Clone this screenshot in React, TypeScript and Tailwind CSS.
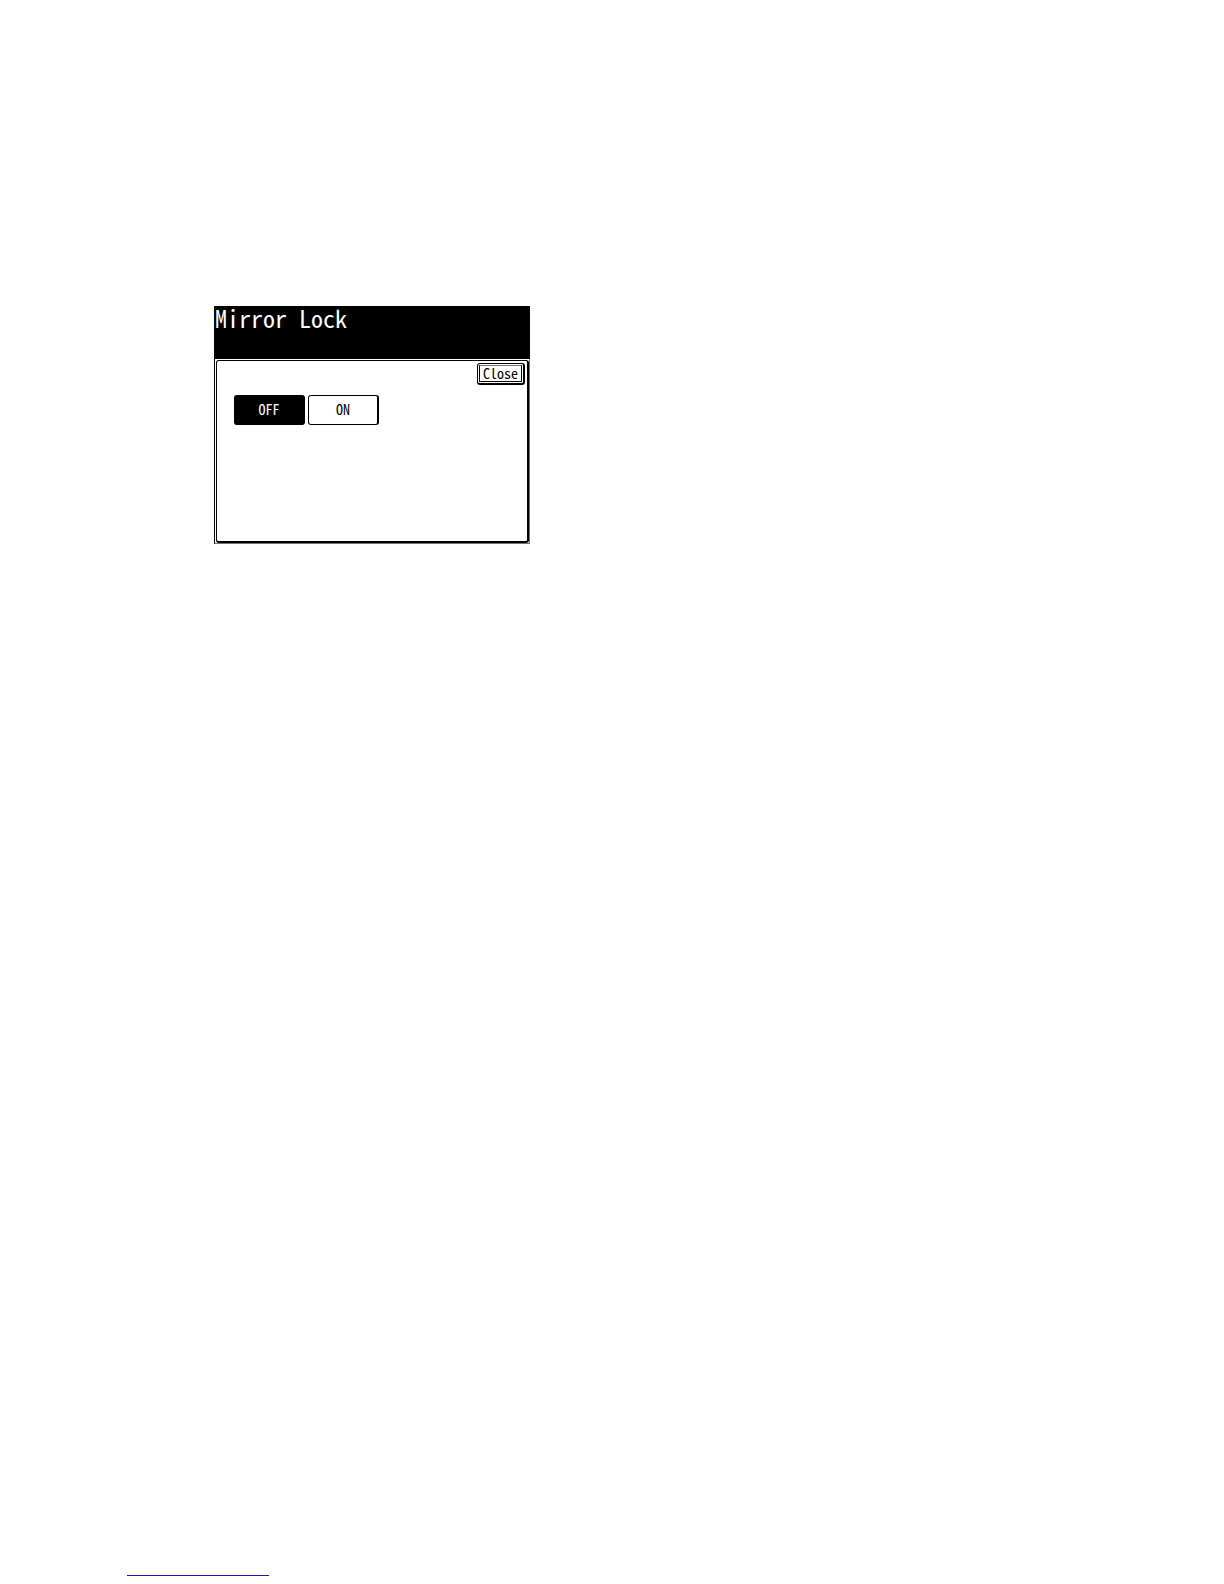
import React, { useState } from 'react';

type LockState = 'OFF' | 'ON';

const options: LockState[] = ['OFF', 'ON'];

// --- Reusable pieces ---
const OptionButton = ({ label, selected, onClick }: { label: string; selected: boolean; onClick: () => void }) => (
  <button
    type="button"
    aria-pressed={selected}
    onClick={onClick}
    className={`w-[71px] h-[30px] flex items-center justify-center rounded-[3px] border border-r-2 border-black pb-0.5 text-sm leading-none font-light ${selected ? 'bg-black text-white' : 'bg-white text-black'}`}
  >
    {label}
  </button>
);

const CloseButton = () => (
  <button type="button" className="rounded-[3px] border border-r-2 border-b-2 border-black bg-white p-px">
    <span className="flex h-[17px] items-center border border-black border-t-neutral-500 px-[3px] pb-0.5 text-sm leading-none font-light">Close</span>
  </button>
);

// --- Main screen ---
export default function App() {
  const [lock, setLock] = useState<LockState>('OFF');

  return (
    <div className="flex min-h-screen flex-col justify-between bg-white pt-[306px] pb-2 font-['Noto_Sans_Mono_CJK_JP','Noto_Sans_CJK_JP',monospace] text-black">
      <main className="ml-[214px] w-full max-w-[316px]">
        <header className="h-[53px] bg-black">
          <h1 className="pl-px text-2xl leading-6 text-white">Mirror Lock</h1>
        </header>

        <section className="border-l border-r border-b border-l-black border-r-neutral-500 border-b-neutral-500 pt-px pl-px">
          <div className="min-h-[183px] rounded-[3px] border border-r-2 border-b-2 border-black pt-0.5 pr-0.5 pl-[17px]">
            <div className="flex justify-end">
              <CloseButton />
            </div>
            <div className="mt-2.5 flex gap-[3px]">
              {options.map((option) => (
                <OptionButton key={option} label={option} selected={lock === option} onClick={() => setLock(option)} />
              ))}
            </div>
          </div>
        </section>
      </main>

      <footer className="flex pl-[127px]">
        <a href="#top" aria-label="Back to top" className="block h-px w-[142px] bg-[#1c1c9c]" />
      </footer>
    </div>
  );
}
